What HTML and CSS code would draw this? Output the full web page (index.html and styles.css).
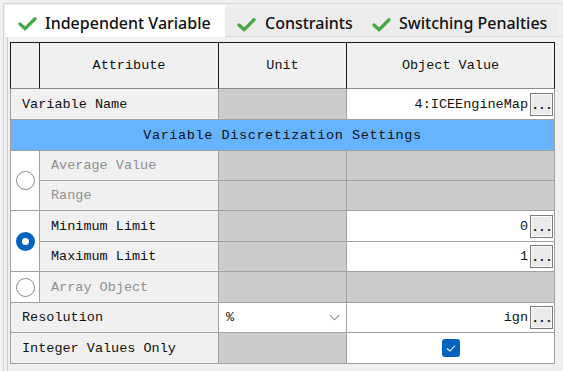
FILE: index.html
```html
<!doctype html>
<html lang="en">
<head>
    <meta charset="utf-8">
    <title>Variable Settings</title>
    <link rel="stylesheet" href="styles.css">
</head>
<body>
    <div class="window">
        <div class="tabbar">
            <div class="tab active">
                <svg class="tick" viewBox="0 0 22 16"><path d="M3 8.5 L8.5 13.5 L19 3" /></svg>
                <span>Independent Variable</span>
            </div>
            <div class="tab second">
                <svg class="tick" viewBox="0 0 22 16"><path d="M3 8.5 L8.5 13.5 L19 3" /></svg>
                <span>Constraints</span>
            </div>
            <div class="tab third">
                <svg class="tick" viewBox="0 0 22 16"><path d="M3 8.5 L8.5 13.5 L19 3" /></svg>
                <span>Switching Penalties</span>
            </div>
            <div class="tab-fill"></div>
        </div>

        <div class="pane">
            <table class="grid">
                <colgroup>
                    <col class="c0"><col class="c1"><col class="c2"><col class="c3">
                </colgroup>
                <thead>
                    <tr class="head">
                        <th class="first"></th>
                        <th>Attribute</th>
                        <th>Unit</th>
                        <th>Object Value</th>
                    </tr>
                </thead>
                <tbody>
                    <tr class="r31">
                        <td class="first attr" colspan="2">Variable Name</td>
                        <td class="off"></td>
                        <td class="val"><div class="val-in">4:ICEEngineMap<span class="dots">...</span></div></td>
                    </tr>
                    <tr class="r31">
                        <td class="first band" colspan="4">Variable Discretization Settings</td>
                    </tr>
                    <tr class="r30">
                        <td class="first pick" rowspan="2"><span class="radio"></span></td>
                        <td class="attr sub dim">Average Value</td>
                        <td class="off"></td>
                        <td class="off"></td>
                    </tr>
                    <tr class="r30">
                        <td class="attr sub dim">Range</td>
                        <td class="off"></td>
                        <td class="off"></td>
                    </tr>
                    <tr class="r31">
                        <td class="first pick" rowspan="2"><span class="radio on"></span></td>
                        <td class="attr sub">Minimum Limit</td>
                        <td class="off"></td>
                        <td class="val"><div class="val-in">0<span class="dots">...</span></div></td>
                    </tr>
                    <tr class="r30">
                        <td class="attr sub">Maximum Limit</td>
                        <td class="off"></td>
                        <td class="val"><div class="val-in">1<span class="dots">...</span></div></td>
                    </tr>
                    <tr class="r31">
                        <td class="first pick"><span class="radio"></span></td>
                        <td class="attr sub dim">Array Object</td>
                        <td class="off"></td>
                        <td class="off"></td>
                    </tr>
                    <tr class="r30">
                        <td class="first attr" colspan="2">Resolution</td>
                        <td class="val">
                            <div class="combo">
                                <span>%</span>
                                <svg class="chev" viewBox="0 0 12 7"><path d="M1 1 L6 6 L11 1" /></svg>
                            </div>
                        </td>
                        <td class="val"><div class="val-in">ign<span class="dots">...</span></div></td>
                    </tr>
                    <tr class="r31">
                        <td class="first attr" colspan="2">Integer Values Only</td>
                        <td class="off"></td>
                        <td class="val center">
                            <span class="checkbox">
                                <svg viewBox="0 0 18 18"><path d="M5 9.5 L8 12 L13 6.5" /></svg>
                            </span>
                        </td>
                    </tr>
                </tbody>
            </table>
        </div>
    </div>
</body>
</html>
```

FILE: styles.css
```css
* {
  box-sizing: border-box;
}

body {
  margin: 0;
  height: 371px;
  overflow: hidden;
  background: #f0f0f0;
  font-family: 'Liberation Mono', 'DejaVu Sans Mono', monospace;
  font-size: 13.5px;
  color: #111;
}

.window {
  margin-left: 3px;
  margin-top: 3px;
  height: 368px;
  border-left: 1px solid #d6d6d6;
  border-top: 1px solid #d6d6d6;
}

/* tabs */
.tabbar {
  display: flex;
  height: 33px;
  padding-left: 1px;
}

.tab {
  display: flex;
  align-items: center;
  gap: 7px;
  margin-top: 4px;
  padding-left: 11px;
  padding-top: 2px;
  background: #ececec;
  border-bottom: 1px solid #d8d8d8;
  font-family: 'Noto Sans', 'Open Sans', sans-serif;
  font-size: 16px;
  font-weight: 500;
  color: #111;
}

.tab.active {
  width: 220px;
  margin-top: 1px;
  padding-left: 12px;
  padding-top: 3px;
  background: #fff;
  border-bottom: none;
}

.tab.second {
  width: 135px;
  gap: 8px;
}

.tab.third {
  width: 198px;
}

.tab-fill {
  flex: 1;
  border-bottom: 1px solid #d8d8d8;
}

.tick {
  width: 21px;
  height: 15px;
  flex: none;
  margin-top: 2px;
}

.tick path {
  fill: none;
  stroke: #45a844;
  stroke-width: 3.6;
  stroke-linecap: round;
  stroke-linejoin: round;
}

/* grid */
.pane {
  margin-left: 3px;
  height: 335px;
  border-left: 1px solid #cfcfcf;
  padding-left: 2px;
  padding-top: 5px;
}

.grid {
  width: 545px;
  table-layout: fixed;
  border-collapse: separate;
  border-spacing: 0;
}

.c0 { width: 30px; }
.c1 { width: 179px; }
.c2 { width: 128px; }
.c3 { width: 208px; }

.grid th,
.grid td {
  padding: 0;
  border-right: 1px solid #a0a0a0;
  border-bottom: 1px solid #a0a0a0;
  font-weight: normal;
  white-space: nowrap;
  overflow: hidden;
}

.grid .first {
  border-left: 1px solid #a0a0a0;
}

.head {
  height: 47px;
}

.head th {
  background: #f0f0f0;
  border-top: 1px solid #1a1a1a;
  border-right-color: #1a1a1a;
  border-bottom-color: #8a8a8a;
  text-align: center;
}

.grid .head .first {
  border-left-color: #1a1a1a;
}

.r31 { height: 31px; }
.r30 { height: 30px; }

.attr {
  background: #f0f0f0;
  padding-left: 11px !important;
}

.dim {
  color: #8f8f8f;
}

.off {
  background: #cccccc;
}

.val {
  background: #fff;
}

.val-in {
  display: flex;
  justify-content: flex-end;
  align-items: center;
  gap: 2px;
  padding-right: 1px;
}

.dots {
  width: 23px;
  height: 23px;
  background: #eaeaea;
  border: 1px solid #7a7a7a;
  box-shadow: inset 0 0 0 1px #fdfdfd;
  font-weight: bold;
  font-size: 13px;
  line-height: 24px;
  text-align: center;
  letter-spacing: -1px;
}

.band {
  background: #66b3ff;
  font-weight: bold;
  text-align: center;
  letter-spacing: 0.6px;
}

.pick {
  background: #fff;
  text-align: center;
}

.radio {
  display: inline-block;
  width: 19px;
  height: 19px;
  border: 1px solid #8a8a8a;
  border-radius: 50%;
  background: #fff;
  vertical-align: middle;
  margin-left: 1px;
}

.radio.on {
  border: 6px solid #0063c0;
}

.combo {
  display: flex;
  justify-content: space-between;
  align-items: center;
  height: 29px;
  padding-left: 7px;
  padding-right: 5px;
  margin-right: 1px;
}

.chev {
  width: 11px;
  height: 7px;
}

.chev path {
  fill: none;
  stroke: #8a8a8a;
  stroke-width: 1.1;
}

.center {
  text-align: center;
}

.checkbox {
  display: inline-block;
  width: 18px;
  height: 18px;
  background: #0063c0;
  border-radius: 3px;
  vertical-align: middle;
}

.checkbox svg {
  width: 18px;
  height: 18px;
  display: block;
}

.checkbox path {
  fill: none;
  stroke: #fff;
  stroke-width: 1.1;
}
```
